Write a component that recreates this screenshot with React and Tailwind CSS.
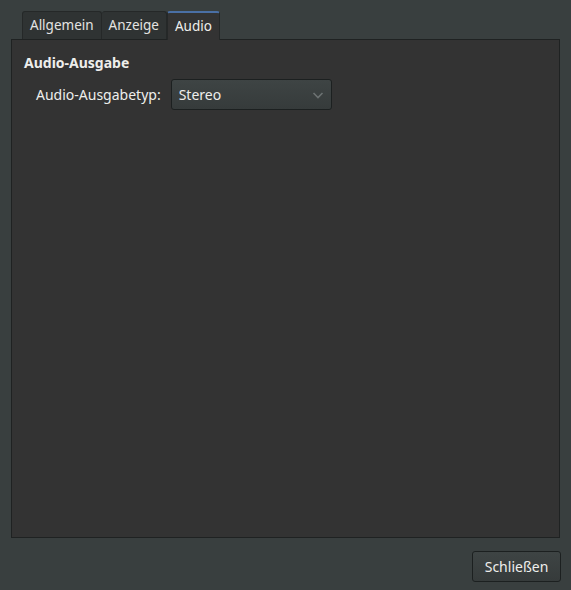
import React from 'react';

export default function App() {
  const font = { fontFamily: '"Noto Sans", "Open Sans", sans-serif' };

  return (
    <div className="w-[571px] h-[590px] bg-[#393f3f] text-[#eeeeec] text-[14px] flex flex-col" style={font}>
      {/* Tabs */}
      <div className="flex pl-[22px] pt-[10px] h-[39px] items-end text-[13.5px]">
        <div className="h-[28px] px-[7px] flex items-center bg-[#2f3333] border border-b-0 border-[#252828] rounded-t-[3px] text-[#e4e4e2]">
          Allgemein
        </div>
        <div className="h-[28px] px-[7px] flex items-center bg-[#2f3333] border border-b-0 border-l-0 border-[#252828] rounded-t-[3px] text-[#e4e4e2]">
          Anzeige
        </div>
        <div className="h-[29px] px-[7px] flex items-center bg-[#333333] border border-b-0 border-[#252828] border-t-2 border-t-[#4a6fa5] rounded-t-[3px] relative top-[1px] z-10">
          Audio
        </div>
      </div>

      {/* Panel */}
      <div className="mx-[11px] h-[499px] bg-[#333333] border border-[#1f2222] pl-[12px] pt-[14px]">
        <div className="font-bold leading-[18px]">Audio-Ausgabe</div>
        <div className="flex items-center mt-[7px] pl-[12px]">
          <span className="mr-[10px]">Audio-Ausgabetyp:</span>
          <div className="w-[161px] h-[31px] rounded-[3px] border border-[#1c2020] bg-gradient-to-b from-[#3e4444] to-[#363b3b] flex items-center justify-between pl-[7px] pr-[6px]">
            <span>Stereo</span>
            <svg width="14" height="14" viewBox="0 0 14 14" fill="none" stroke="#6c7272" strokeWidth="1.6">
              <path d="M2.5 5 L7 9.5 L11.5 5" />
            </svg>
          </div>
        </div>
      </div>

      {/* Footer */}
      <div className="flex justify-end pr-[10px] pt-[13px]">
        <button className="w-[89px] h-[31px] rounded-[3px] border border-[#1c2020] bg-gradient-to-b from-[#3e4444] to-[#363b3b] text-[#eeeeec] text-[14px]" style={font}>
          Schließen
        </button>
      </div>
    </div>
  );
}
